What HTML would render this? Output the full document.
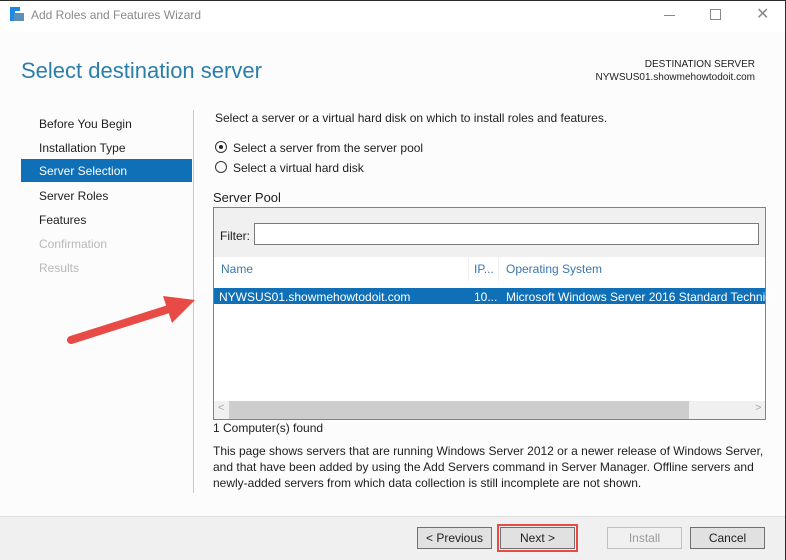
<!DOCTYPE html>
<html><head><style>
*{margin:0;padding:0;box-sizing:border-box}
body{width:786px;height:560px;overflow:hidden;background:#fcfcfc;font-family:"Liberation Sans",sans-serif;font-size:12px;color:#1e1e1e;position:relative}
.a{position:absolute;white-space:nowrap}
.btn{position:absolute;top:527px;height:22px;width:75px;border:1px solid #707070;background:#e1e1e1;text-align:center;line-height:20px;font-size:12px}
</style></head><body>
<div class="a" style="left:0;top:0;width:786px;height:32px;background:#fff;border-top:1px solid #2b2b2b;border-right:1px solid #2b2b2b"></div>
<div class="a" style="left:10px;top:7px;width:5px;height:14px;background:#1e88e5"></div>
<div class="a" style="left:10px;top:7px;width:10px;height:4px;background:#1e88e5"></div>
<div class="a" style="left:14px;top:13px;width:10px;height:8px;background:#5a8fb8"></div>
<div class="a" style="left:31px;top:8px;color:#8a8a8a;font-size:12px">Add Roles and Features Wizard</div>
<div class="a" style="left:664px;top:15px;width:11px;height:1px;background:#888"></div>
<div class="a" style="left:710px;top:9px;width:11px;height:11px;border:1px solid #888"></div>
<div class="a" style="left:756px;top:4px;color:#888;font-size:16px">✕</div>
<div class="a" style="left:785px;top:0;width:1px;height:560px;background:#2b2b2b"></div>
<div class="a" style="left:21px;top:58px;font-size:22px;color:#2a7fa8">Select destination server</div>
<div class="a" style="right:31px;top:58px;font-size:10px;text-align:right;line-height:13px">DESTINATION SERVER<br>NYWSUS01.showmehowtodoit.com</div>
<div class="a" style="left:39px;top:117px">Before You Begin</div>
<div class="a" style="left:39px;top:141px">Installation Type</div>
<div class="a" style="left:21px;top:159px;width:171px;height:23px;background:#0f70b7"></div>
<div class="a" style="left:39px;top:164px;color:#fff">Server Selection</div>
<div class="a" style="left:39px;top:189px">Server Roles</div>
<div class="a" style="left:39px;top:213px">Features</div>
<div class="a" style="left:39px;top:237px;color:#b8b8b8">Confirmation</div>
<div class="a" style="left:39px;top:261px;color:#b8b8b8">Results</div>
<div class="a" style="left:193px;top:110px;width:1px;height:383px;background:#c8c8c8"></div>
<div class="a" style="left:215px;top:111px">Select a server or a virtual hard disk on which to install roles and features.</div>
<div class="a" style="left:215px;top:141px;width:12px;height:12px;border:1px solid #333;border-radius:50%"></div>
<div class="a" style="left:219px;top:145px;width:4px;height:4px;background:#222;border-radius:50%"></div>
<div class="a" style="left:233px;top:141px">Select a server from the server pool</div>
<div class="a" style="left:215px;top:161px;width:12px;height:12px;border:1px solid #333;border-radius:50%"></div>
<div class="a" style="left:233px;top:161px">Select a virtual hard disk</div>
<div class="a" style="left:213px;top:190px;font-size:13px">Server Pool</div>
<div class="a" style="left:213px;top:207px;width:553px;height:213px;border:1px solid #828282;background:#fff"></div>
<div class="a" style="left:214px;top:208px;width:551px;height:49px;background:#f0f0f0"></div>
<div class="a" style="left:220px;top:229px">Filter:</div>
<div class="a" style="left:254px;top:223px;width:505px;height:22px;border:1px solid #7a7a7a;background:#fff"></div>
<div class="a" style="left:221px;top:262px;color:#3a77b0">Name</div>
<div class="a" style="left:468px;top:257px;width:1px;height:24px;background:#eee"></div>
<div class="a" style="left:474px;top:262px;color:#3a77b0">IP...</div>
<div class="a" style="left:498px;top:257px;width:1px;height:24px;background:#eee"></div>
<div class="a" style="left:506px;top:262px;color:#3a77b0">Operating System</div>
<div class="a" style="left:214px;top:288px;width:551px;height:16px;background:#0f70b7"></div>
<div class="a" style="left:219px;top:290px;color:#fff">NYWSUS01.showmehowtodoit.com</div>
<div class="a" style="left:474px;top:290px;color:#fff">10...</div>
<div class="a" style="left:506px;top:290px;color:#fff">Microsoft Windows Server 2016 Standard Technic</div>
<div class="a" style="left:214px;top:401px;width:551px;height:18px;background:#f0f0f0"></div>
<div class="a" style="left:229px;top:401px;width:460px;height:18px;background:#cdcdcd"></div>
<div class="a" style="left:218px;top:402px;color:#aaa;font-size:11px">&lt;</div>
<div class="a" style="left:755px;top:402px;color:#aaa;font-size:11px">&gt;</div>
<div class="a" style="left:213px;top:421px">1 Computer(s) found</div>
<div class="a" style="left:213px;top:443px;line-height:16px">This page shows servers that are running Windows Server 2012 or a newer release of Windows Server,<br>and that have been added by using the Add Servers command in Server Manager. Offline servers and<br>newly-added servers from which data collection is still incomplete are not shown.</div>
<svg class="a" style="left:0;top:0" width="786" height="560"><line x1="71" y1="340" x2="172" y2="308" stroke="#e84a45" stroke-width="8" stroke-linecap="round"/><polygon points="163,296 195,300 172,323" fill="#e84a45"/></svg>
<div class="a" style="left:0;top:516px;width:785px;height:44px;background:#f0f0f0;border-top:1px solid #dcdcdc"></div>
<div class="btn" style="left:417px">&lt; Previous</div>
<div class="a" style="left:497px;top:524px;width:81px;height:28px;border:2px solid #e84a45"></div>
<div class="btn" style="left:500px">Next &gt;</div>
<div class="btn" style="left:607px;border-color:#c0c0c0;background:#f0f0f0;color:#9a9a9a">Install</div>
<div class="btn" style="left:690px">Cancel</div>
</body></html>
